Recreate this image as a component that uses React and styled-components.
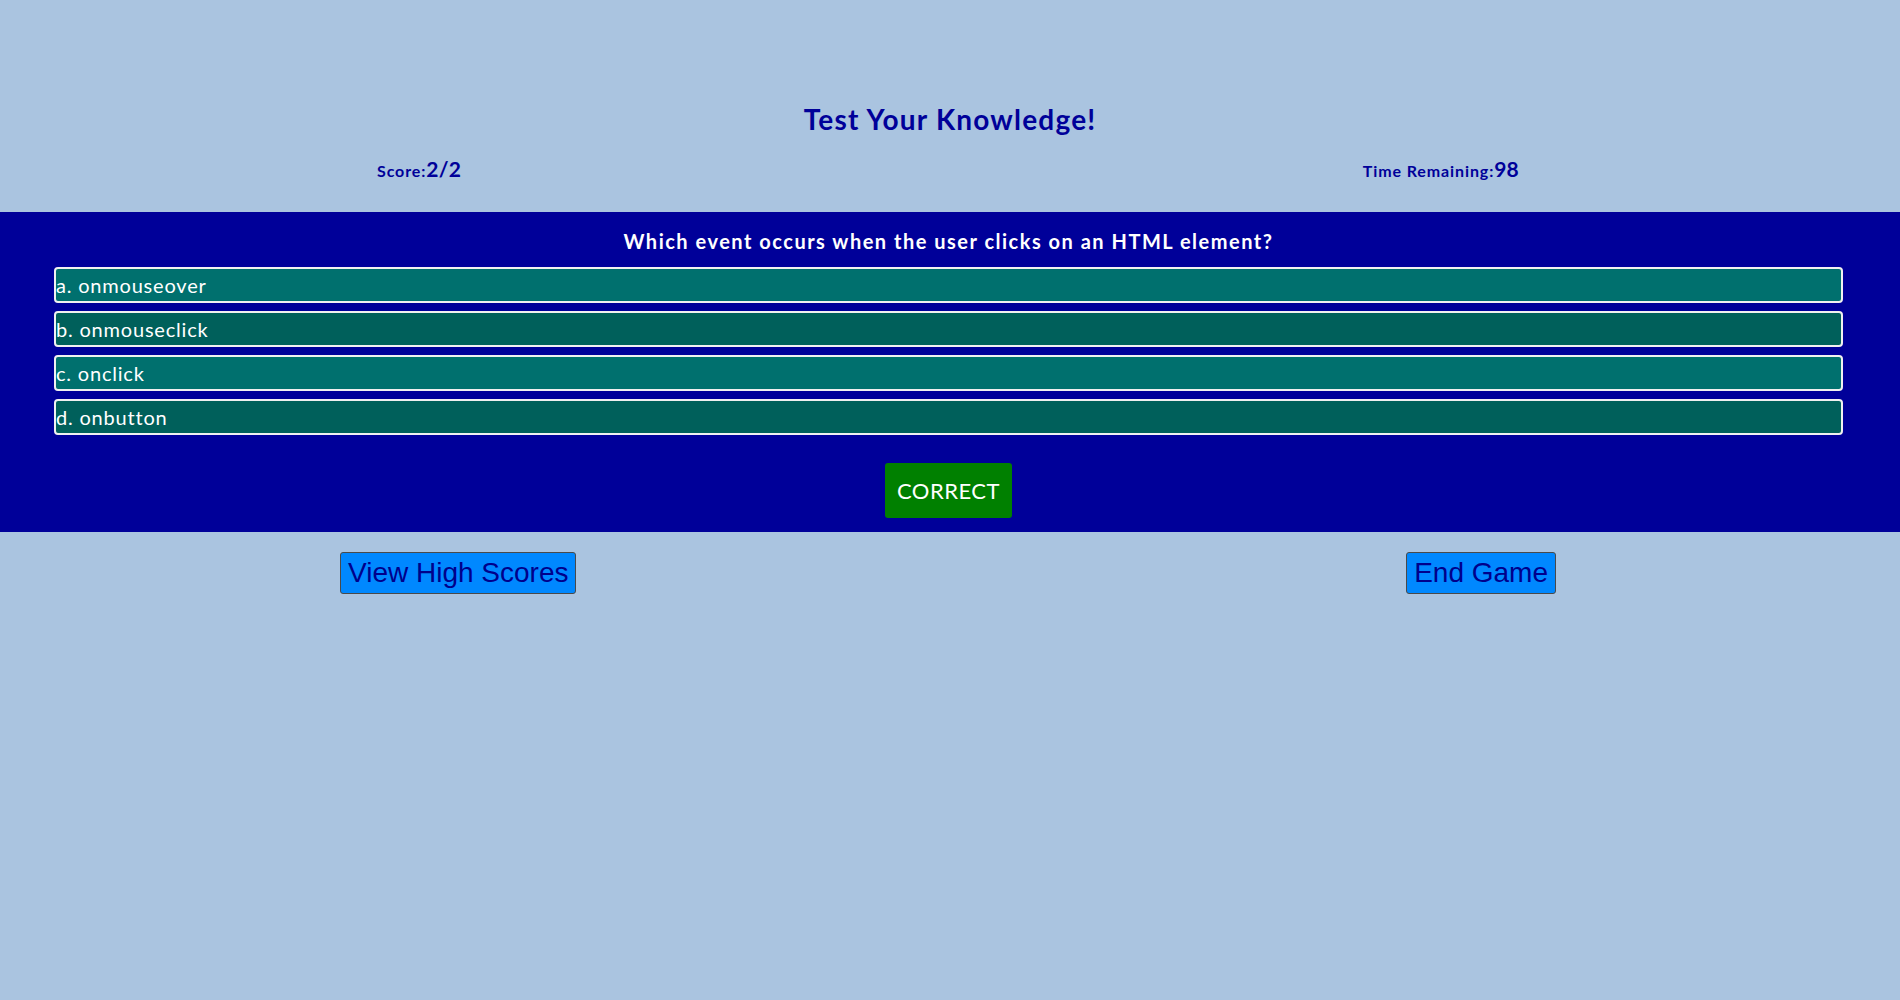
import React, { useState } from 'react';
import styled, { createGlobalStyle } from 'styled-components';

const COLORS = {
  page: '#aac4e0',
  navy: '#000099',
  tealLight: '#00706e',
  tealDark: '#00605b',
  green: '#008000',
  button: '#0088ff',
};

const GlobalStyle = createGlobalStyle`
  html, body {
    margin: 0;
    padding: 0;
    background-color: ${COLORS.page};
    min-height: 100vh;
  }
  body {
    font-family: Lato, "Open Sans", sans-serif;
  }
`;

const Header = styled.header`
  display: flex;
  flex-direction: column;
  padding-top: 102px;
  padding-bottom: 29px;
  gap: 21px;
`;

const Title = styled.h1`
  margin: 0;
  font-size: 28px;
  line-height: 34px;
  font-weight: 700;
  letter-spacing: 1.2px;
  color: ${COLORS.navy};
  text-align: center;
`;

const Row = styled.div`
  display: flex;
  justify-content: space-between;
  align-items: center;
  padding: 0 ${(p) => p.$right}px 0 ${(p) => p.$left}px;
`;

const Stat = styled.div`
  display: flex;
  align-items: baseline;
  line-height: 24px;
  color: ${COLORS.navy};
  font-weight: 700;
`;

const StatLabel = styled.span`
  font-size: 16px;
  letter-spacing: 0.9px;
`;

const StatValue = styled.span`
  font-size: 21px;
  letter-spacing: 0.2px;
`;

const QuizPanel = styled.section`
  display: flex;
  flex-direction: column;
  align-items: center;
  background-color: ${COLORS.navy};
  padding: 17px 57px 14px 54px;
`;

const Question = styled.h2`
  margin: 0 0 14px;
  font-size: 20px;
  line-height: 24px;
  font-weight: 700;
  letter-spacing: 1.5px;
  color: #ffffff;
  text-align: center;
`;

const Answers = styled.div`
  display: flex;
  flex-direction: column;
  gap: 8px;
  width: 100%;
`;

const Answer = styled.button`
  display: flex;
  align-items: center;
  box-sizing: border-box;
  width: 100%;
  height: 36px;
  padding: 0;
  border: 2px solid #f0f0f0;
  border-radius: 4px;
  background-color: ${(p) => (p.$odd ? COLORS.tealDark : COLORS.tealLight)};
  color: #ffffff;
  font-family: Lato, "Open Sans", sans-serif;
  font-size: 20px;
  letter-spacing: 0.8px;
  text-align: left;
  cursor: pointer;
`;

const Result = styled.div`
  margin-top: 28px;
  height: 55px;
  padding: 0 12px;
  display: flex;
  align-items: center;
  border-radius: 3px;
  background-color: ${COLORS.green};
  color: #ffffff;
  font-size: 22px;
  letter-spacing: 0.5px;
`;

const Footer = styled.div`
  margin-top: 20px;
`;

const NavButton = styled.button`
  height: 42px;
  padding: 0 7px;
  border: 1px solid #4a4a4a;
  border-radius: 3px;
  background-color: ${COLORS.button};
  color: #00008b;
  font-family: "Liberation Sans", Arial, sans-serif;
  font-size: 28px;
  cursor: pointer;
`;

const answers = ['a. onmouseover', 'b. onmouseclick', 'c. onclick', 'd. onbutton'];

const App = () => {
  const [score] = useState('2/2');
  const [time] = useState(98);

  return (
    <>
      <GlobalStyle />
      <Header>
        <Title>Test Your Knowledge!</Title>
        <Row $left={377} $right={381}>
          <Stat>
            <StatLabel>Score:</StatLabel>
            <StatValue>{score}</StatValue>
          </Stat>
          <Stat>
            <StatLabel>Time Remaining:</StatLabel>
            <StatValue>{time}</StatValue>
          </Stat>
        </Row>
      </Header>
      <QuizPanel>
        <Question>Which event occurs when the user clicks on an HTML element?</Question>
        <Answers>
          {answers.map((a, i) => (
            <Answer key={a} $odd={i % 2 === 1}>{a}</Answer>
          ))}
        </Answers>
        <Result>CORRECT</Result>
      </QuizPanel>
      <Footer>
        <Row $left={340} $right={344}>
          <NavButton>View High Scores</NavButton>
          <NavButton>End Game</NavButton>
        </Row>
      </Footer>
    </>
  );
};

export default App;
